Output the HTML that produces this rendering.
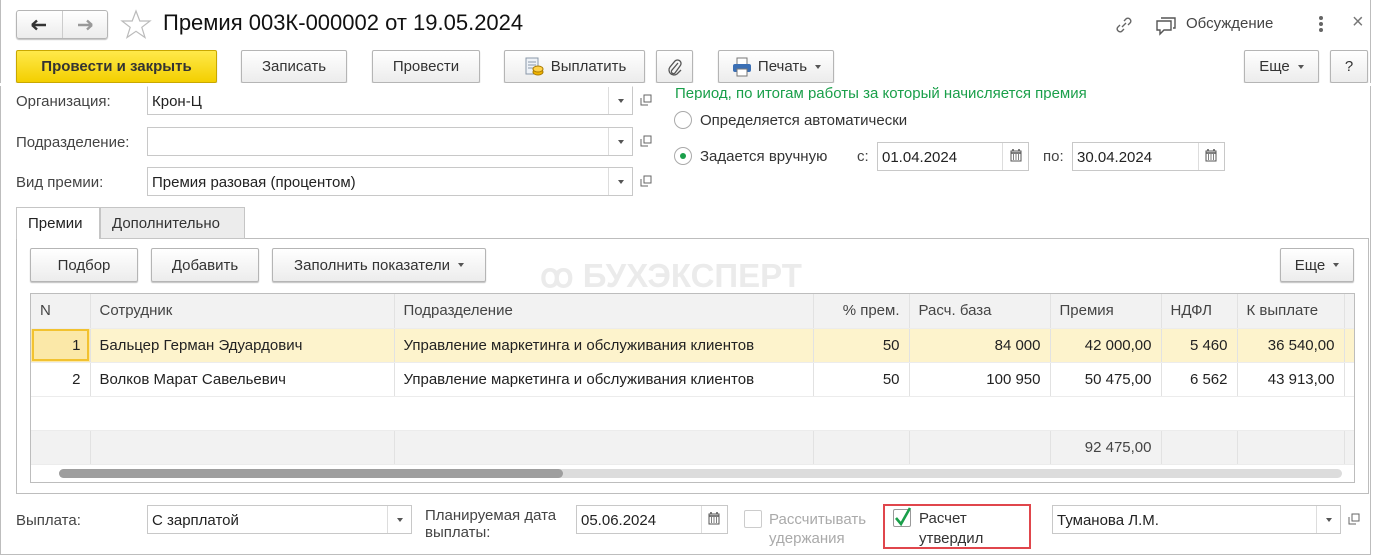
<!DOCTYPE html>
<html><head><meta charset="utf-8"><style>
*{box-sizing:border-box;margin:0;padding:0}
body{width:1374px;height:557px;background:#fff;font-family:"Liberation Sans",sans-serif;font-size:15px;color:#333;position:relative;overflow:hidden}
.a{position:absolute}
.win{left:0;top:0;width:1371px;height:555px;border:1px solid #bdbdbd;border-top:none}
.btn{position:absolute;border:1px solid #b5b5b5;border-radius:2px;background:linear-gradient(#fff,#ececec);box-shadow:0 1px 1px rgba(0,0,0,.25);display:flex;align-items:center;justify-content:center;font-size:15px;color:#333}
.inp{position:absolute;border:1px solid #c8c8c8;background:#fff;height:29px;font-size:15px;color:#222;padding:6px 4px 4px}
.dd{position:absolute;top:0;bottom:0;width:24px;border-left:1px solid #ddd}
.dd:after{content:"";position:absolute;left:9px;top:12px;border:3px solid transparent;border-top:4px solid #555}
.lbl{position:absolute;font-size:15px;color:#444}
.tri{display:inline-block;margin-left:8px;border:3px solid transparent;border-top:4px solid #555;vertical-align:middle;margin-top:3px}
table{border-collapse:collapse;table-layout:fixed}
td{height:34px;border-right:1px solid #e2e2e2;border-bottom:1px solid #ececec;padding:0 9px;white-space:nowrap;overflow:hidden;font-size:15px;color:#222}
.r{text-align:right}
</style></head><body>
<div class="a win"></div>
<div class="btn" style="left:16px;top:10px;width:92px;height:29px;border-radius:3px;justify-content:flex-start">
<div style="width:46px;height:100%;border-right:1px solid #ccc;display:flex;align-items:center;justify-content:center"><svg width="16" height="12"><path d="M1 6H15M1 6L6 1.5M1 6L6 10.5" stroke="#333" stroke-width="2.4" fill="none"/></svg></div>
<div style="width:45px;display:flex;justify-content:center"><svg width="16" height="12"><path d="M1 6H15M15 6L10 1.5M15 6L10 10.5" stroke="#999" stroke-width="2.4" fill="none"/></svg></div></div>
<svg class="a" style="left:120px;top:9px" width="32" height="30"><path d="M16 2L19.8 12H30L21.8 18.3L25 28.5L16 22.3L7 28.5L10.2 18.3L2 12H12.2Z" fill="none" stroke="#bbb" stroke-width="1.2"/></svg>
<div class="a" style="left:163px;top:10px;font-size:22px;color:#111">Премия 003К-000002 от 19.05.2024</div>
<svg class="a" style="left:1113px;top:14px" width="22" height="22"><path d="M9 13L13 9M7 11L4.5 13.5a3 3 0 0 0 4 4L11 15M15 11L17.5 8.5a3 3 0 0 0-4-4L11 7" stroke="#666" stroke-width="1.4" fill="none"/></svg>
<svg class="a" style="left:1155px;top:14px" width="22" height="22"><path d="M6 4H20V14H18M2 7H16V16H9L5 20V16H2Z" stroke="#555" stroke-width="1.4" fill="#fff"/></svg>
<div class="a" style="left:1186px;top:15px;font-size:15px;color:#444">Обсуждение</div>
<div class="a" style="left:1319px;top:16px;width:4px;height:4px;background:#666;border-radius:2px;box-shadow:0 6px #666,0 12px #666"></div>
<div class="a" style="left:1352px;top:11px;font-size:20px;color:#777">×</div>
<div class="btn" style="left:16px;top:50px;width:201px;height:33px;background:linear-gradient(#ffe94a,#f3cf00);border-color:#c9a800;font-weight:bold;color:#333">Провести и закрыть</div>
<div class="btn" style="left:241px;top:50px;width:106px;height:33px">Записать</div>
<div class="btn" style="left:372px;top:50px;width:108px;height:33px">Провести</div>
<div class="btn" style="left:504px;top:50px;width:141px;height:33px"><svg width="22" height="22" style="margin-right:6px"><rect x="3" y="2" width="12" height="16" fill="#eef2f7" stroke="#8a98a8"/><path d="M5 6H13M5 9H13M5 12H10" stroke="#8a98a8"/><ellipse cx="15" cy="16" rx="5" ry="3" fill="#f0b400" stroke="#a87a00"/><ellipse cx="15" cy="13" rx="5" ry="3" fill="#ffd24a" stroke="#a87a00"/></svg>Выплатить</div>
<div class="btn" style="left:656px;top:50px;width:37px;height:33px"><svg width="16" height="18"><path d="M11 5L5 12a2 2 0 0 0 3 3L13 8a3.5 3.5 0 0 0-5-5L3 9a5 5 0 0 0 7 7l4-4" stroke="#555" stroke-width="1.3" fill="none"/></svg></div>
<div class="btn" style="left:718px;top:50px;width:116px;height:33px"><svg width="22" height="20" style="margin-right:5px"><rect x="6" y="1" width="10" height="7" fill="#fff" stroke="#777"/><rect x="2" y="7" width="18" height="8" rx="2" fill="#3b6fb4"/><rect x="6" y="12" width="10" height="7" fill="#fff" stroke="#777"/></svg>Печать<span class="tri"></span></div>
<div class="btn" style="left:1244px;top:50px;width:75px;height:33px">Еще<span class="tri"></span></div>
<div class="btn" style="left:1330px;top:50px;width:38px;height:33px">?</div>
<div class="lbl" style="left:16px;top:93px">Организация:</div>
<div class="inp" style="left:147px;top:86px;width:486px;border-top-color:#fff">Крон-Ц<div class="dd" style="right:0"></div></div>
<div class="lbl" style="left:16px;top:134px">Подразделение:</div>
<div class="inp" style="left:147px;top:127px;width:486px"><div class="dd" style="right:0"></div></div>
<div class="lbl" style="left:16px;top:174px">Вид премии:</div>
<div class="inp" style="left:147px;top:167px;width:486px">Премия разовая (процентом)<div class="dd" style="right:0"></div></div>
<svg class="a" style="left:640px;top:94px" width="12" height="12"><path d="M4 1H11V8H4ZM1 4V11H8" stroke="#666" fill="none"/></svg>
<svg class="a" style="left:640px;top:135px" width="12" height="12"><path d="M4 1H11V8H4ZM1 4V11H8" stroke="#666" fill="none"/></svg>
<svg class="a" style="left:640px;top:175px" width="12" height="12"><path d="M4 1H11V8H4ZM1 4V11H8" stroke="#666" fill="none"/></svg>
<div class="a" style="left:0;top:83px;width:1374px;height:3px;background:#fff"></div>
<div class="a" style="left:675px;top:87px;font-size:15px;color:#1a9f4a;height:13px;overflow:hidden;line-height:20px"><div style="margin-top:-3px">Период, по итогам работы за который начисляется премия</div></div>
<div class="a" style="left:674px;top:111px;width:18px;height:18px;border:1px solid #aaa;border-radius:50%"></div>
<div class="lbl" style="left:700px;top:112px;color:#333">Определяется автоматически</div>
<div class="a" style="left:674px;top:147px;width:18px;height:18px;border:1px solid #aaa;border-radius:50%"><div style="width:6px;height:6px;background:#1a9f4a;border-radius:50%;margin:5px"></div></div>
<div class="lbl" style="left:700px;top:148px;color:#333">Задается вручную</div>
<div class="lbl" style="left:857px;top:148px">с:</div>
<div class="inp" style="left:877px;top:142px;width:152px">01.04.2024<div class="a" style="right:0;top:0;bottom:0;width:26px;border-left:1px solid #ddd"></div></div>
<div class="lbl" style="left:1043px;top:148px">по:</div>
<div class="inp" style="left:1072px;top:142px;width:153px">30.04.2024<div class="a" style="right:0;top:0;bottom:0;width:26px;border-left:1px solid #ddd"></div></div>
<svg class="a" style="left:1010px;top:149px" width="12" height="13"><rect x="1" y="2" width="10" height="10" fill="none" stroke="#555"/><path d="M1 4H11M3 6h1M5.5 6h1M8 6h1M3 8h1M5.5 8h1M8 8h1M3 10h1M5.5 10h1M8 10h1M3 0v2M9 0v2" stroke="#555" stroke-width="1.5"/></svg>
<svg class="a" style="left:1205px;top:149px" width="12" height="13"><rect x="1" y="2" width="10" height="10" fill="none" stroke="#555"/><path d="M1 4H11M3 6h1M5.5 6h1M8 6h1M3 8h1M5.5 8h1M8 8h1M3 10h1M5.5 10h1M8 10h1M3 0v2M9 0v2" stroke="#555" stroke-width="1.5"/></svg>
<div class="a" style="left:16px;top:238px;width:1353px;height:256px;border:1px solid #bdbdbd"></div>
<div class="a" style="left:16px;top:207px;width:84px;height:32px;border:1px solid #c5c5c5;border-bottom:none;background:#fff;padding:7px 11px;font-size:15px;color:#222">Премии</div>
<div class="a" style="left:100px;top:207px;width:145px;height:32px;border:1px solid #c5c5c5;background:#ececec;padding:7px 11px;font-size:15px;color:#333">Дополнительно</div>
<div class="btn" style="left:30px;top:248px;width:108px;height:34px">Подбор</div>
<div class="btn" style="left:151px;top:248px;width:108px;height:34px">Добавить</div>
<div class="btn" style="left:272px;top:248px;width:214px;height:34px">Заполнить показатели<span class="tri"></span></div>
<div class="btn" style="left:1280px;top:248px;width:74px;height:34px">Еще<span class="tri"></span></div>
<div class="a" style="left:540px;top:256px;font-size:33px;font-weight:bold;color:#ebebeb;white-space:nowrap">ꝏ БУХЭКСПЕРТ</div>
<div class="a" style="left:30px;top:293px;width:1325px;height:190px;border:1px solid #bdbdbd;overflow:hidden;background:#fff">
<table style="width:1323px">
<colgroup><col style="width:59px"><col style="width:304px"><col style="width:419px"><col style="width:96px"><col style="width:141px"><col style="width:111px"><col style="width:76px"><col style="width:107px"><col style="width:10px"></colgroup>
<tr style="background:#f2f2f2"><td style="color:#444">N</td><td style="color:#444">Сотрудник</td><td style="color:#444">Подразделение</td><td class="r" style="color:#444">% прем.</td><td style="color:#444">Расч. база</td><td style="color:#444">Премия</td><td style="color:#444">НДФЛ</td><td style="color:#444">К выплате</td><td></td></tr>
<tr style="background:#fdf3cc"><td class="r" style="background:#fbe8a8;outline:2px solid #f2c230;outline-offset:-3px">1</td><td>Бальцер Герман Эдуардович</td><td>Управление маркетинга и обслуживания клиентов</td><td class="r">50</td><td class="r">84 000</td><td class="r">42 000,00</td><td class="r">5 460</td><td class="r">36 540,00</td><td></td></tr>
<tr><td class="r">2</td><td>Волков Марат Савельевич</td><td>Управление маркетинга и обслуживания клиентов</td><td class="r">50</td><td class="r">100 950</td><td class="r">50 475,00</td><td class="r">6 562</td><td class="r">43 913,00</td><td></td></tr>
<tr><td style="border-right:none"></td><td style="border-right:none"></td><td style="border-right:none"></td><td style="border-right:none"></td><td style="border-right:none"></td><td style="border-right:none"></td><td style="border-right:none"></td><td style="border-right:none"></td><td style="border-right:none"></td></tr>
<tr style="background:#f2f2f2"><td style="height:32px"></td><td></td><td></td><td></td><td></td><td class="r" style="color:#444">92 475,00</td><td></td><td></td><td></td></tr>
</table>
<div class="a" style="left:28px;top:175px;width:1283px;height:9px;background:#dcdcdc;border-radius:5px"></div>
<div class="a" style="left:28px;top:175px;width:504px;height:9px;background:#9e9e9e;border-radius:5px"></div>
</div>
<div class="lbl" style="left:16px;top:512px">Выплата:</div>
<div class="inp" style="left:147px;top:505px;width:265px">С зарплатой<div class="dd" style="right:0"></div></div>
<div class="lbl" style="left:425px;top:507px;line-height:17px">Планируемая дата<br>выплаты:</div>
<div class="inp" style="left:576px;top:505px;width:152px">05.06.2024<div class="a" style="right:0;top:0;bottom:0;width:26px;border-left:1px solid #ddd"></div></div>
<svg class="a" style="left:708px;top:512px" width="12" height="13"><rect x="1" y="2" width="10" height="10" fill="none" stroke="#555"/><path d="M1 4H11M3 6h1M5.5 6h1M8 6h1M3 8h1M5.5 8h1M8 8h1M3 10h1M5.5 10h1M8 10h1M3 0v2M9 0v2" stroke="#555" stroke-width="1.5"/></svg>
<div class="a" style="left:744px;top:510px;width:18px;height:18px;border:1px solid #ccc;border-radius:2px"></div>
<div class="lbl" style="left:769px;top:510px;line-height:19px;color:#aaa">Рассчитывать<br>удержания</div>
<div class="a" style="left:883px;top:504px;width:148px;height:45px;border:2px solid #e0464c"></div>
<div class="a" style="left:893px;top:509px;width:18px;height:18px;border:1px solid #999;border-radius:2px"></div>
<svg class="a" style="left:893px;top:505px" width="20" height="22"><path d="M3 13L8 19L17 3" stroke="#1a9f4a" stroke-width="2.6" fill="none"/></svg>
<div class="lbl" style="left:919px;top:509px;line-height:20px;color:#333">Расчет<br>утвердил</div>
<div class="inp" style="left:1052px;top:505px;width:289px">Туманова Л.М.<div class="dd" style="right:0"></div></div>
<svg class="a" style="left:1348px;top:513px" width="12" height="12"><path d="M4 1H11V8H4ZM1 4V11H8" stroke="#666" fill="none"/></svg>
</body></html>
